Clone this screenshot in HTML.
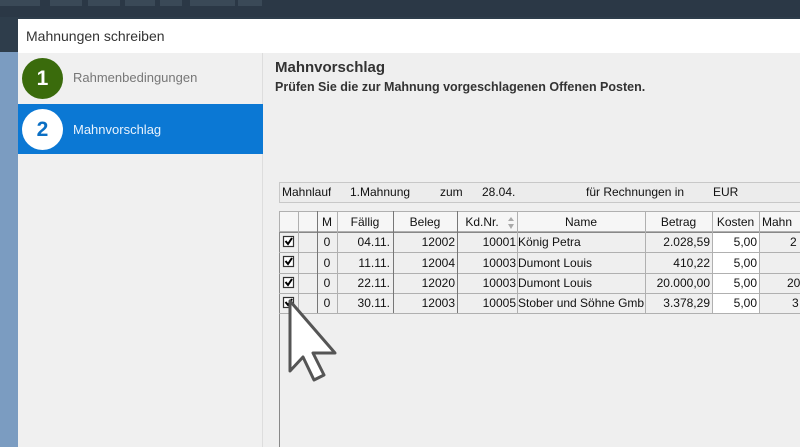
<!DOCTYPE html>
<html><head><style>
*{margin:0;padding:0;box-sizing:border-box}
html,body{width:800px;height:447px;overflow:hidden}
body{position:relative;background:#2e3d4b;font-family:"Liberation Sans",sans-serif}
.abs{position:absolute}
.cell{position:absolute;font-size:12px;color:#111;line-height:20px;white-space:nowrap;overflow:hidden}
</style></head><body>
<div class="abs" style="left:0;top:0;width:800px;height:17px;background:#2b3846"></div>
<div class="abs" style="left:0;top:0;width:40px;height:6px;background:#3a4957"></div>
<div class="abs" style="left:50px;top:0;width:32px;height:6px;background:#3a4957"></div>
<div class="abs" style="left:88px;top:0;width:32px;height:6px;background:#3a4957"></div>
<div class="abs" style="left:125px;top:0;width:30px;height:6px;background:#3a4957"></div>
<div class="abs" style="left:160px;top:0;width:22px;height:6px;background:#3a4957"></div>
<div class="abs" style="left:190px;top:0;width:45px;height:6px;background:#3a4957"></div>
<div class="abs" style="left:238px;top:0;width:24px;height:6px;background:#3a4957"></div>
<div class="abs" style="left:0;top:52px;width:18px;height:395px;background:#7b9cc1"></div>
<div class="abs" style="left:18px;top:19px;width:782px;height:34px;background:#fff"></div>
<div class="abs" style="left:26px;top:28px;font-size:14px;color:#333">Mahnungen schreiben</div>
<div class="abs" style="left:18px;top:53px;width:245px;height:394px;background:#f0f0f0;border-right:1px solid #ddd"></div>
<div class="abs" style="left:263px;top:53px;width:537px;height:394px;background:#efefef"></div>
<div class="abs" style="left:22px;top:58px;width:41px;height:41px;border-radius:50%;background:#3a6b0c;color:#fff;font-weight:bold;font-size:21px;text-align:center;line-height:41px">1</div>
<div class="abs" style="left:73px;top:70px;font-size:13px;color:#777">Rahmenbedingungen</div>
<div class="abs" style="left:18px;top:104px;width:245px;height:50px;background:#0b78d4"></div>
<div class="abs" style="left:22px;top:109px;width:41px;height:41px;border-radius:50%;background:#fff;color:#0b6fc4;font-weight:bold;font-size:21px;text-align:center;line-height:41px">2</div>
<div class="abs" style="left:73px;top:122px;font-size:13px;color:#e8f2fc">Mahnvorschlag</div>
<div class="abs" style="left:275px;top:59px;font-size:15px;font-weight:bold;color:#333">Mahnvorschlag</div>
<div class="abs" style="left:275px;top:80px;font-size:12.5px;font-weight:bold;color:#333">Prüfen Sie die zur Mahnung vorgeschlagenen Offenen Posten.</div>
<div class="abs" style="left:279px;top:182px;width:530px;height:21px;border:1px solid #c8c8c8;background:#ececec"></div>
<div class="cell" style="left:282px;top:182px">Mahnlauf</div>
<div class="cell" style="left:350px;top:182px">1.Mahnung</div>
<div class="cell" style="left:440px;top:182px">zum</div>
<div class="cell" style="left:482px;top:182px">28.04.</div>
<div class="cell" style="left:586px;top:182px">für Rechnungen in</div>
<div class="cell" style="left:713px;top:182px">EUR</div>
<div class="abs" style="left:279px;top:211px;width:530px;height:236px;border-left:1px solid #888;border-top:1px solid #888;background:#efefef"></div>
<svg class="abs" style="left:279px;top:211px" width="521" height="103">
<g stroke="#b0b0b0" stroke-width="1" fill="none">
<rect x="0.5" y="0.5" width="540" height="20" fill="#f6f6f6"/>
<rect x="433" y="21" width="47" height="81" fill="#fff" stroke="none"/>
<line x1="0" y1="21.5" x2="521" y2="21.5" stroke="#888"/>
<line x1="0" y1="41.5" x2="521" y2="41.5"/>
<line x1="0" y1="62.5" x2="521" y2="62.5"/>
<line x1="0" y1="82.5" x2="521" y2="82.5"/>
<line x1="0" y1="102.5" x2="521" y2="102.5"/>
<line x1="19.5" y1="0" x2="19.5" y2="102"/>
<line x1="38.5" y1="0" x2="38.5" y2="102" stroke="#777"/>
<line x1="58.5" y1="0" x2="58.5" y2="102"/>
<line x1="114.5" y1="0" x2="114.5" y2="102" stroke="#777"/>
<line x1="178.5" y1="0" x2="178.5" y2="102" stroke="#777"/>
<line x1="238.5" y1="0" x2="238.5" y2="102"/>
<line x1="366.5" y1="0" x2="366.5" y2="102"/>
<line x1="433.5" y1="0" x2="433.5" y2="102"/>
<line x1="480.5" y1="0" x2="480.5" y2="102"/>
</g>
<path d="M232 6 L235 10 L229 10Z M232 18 L235 13 L229 13Z" fill="#aaa"/>
<g fill="#fff" stroke="#333" stroke-width="1.2">
<rect x="4.5" y="25.5" width="10" height="10"/><rect x="4.5" y="45.5" width="10" height="10"/><rect x="4.5" y="66.5" width="10" height="10"/><rect x="4.5" y="86.5" width="10" height="10"/>
</g>
<g fill="none" stroke="#000" stroke-width="2">
<path d="M6.5 30 L9 33 L13 27"/><path d="M6.5 50 L9 53 L13 47"/><path d="M6.5 71 L9 74 L13 68"/><path d="M6.5 91 L9 94 L13 88"/>
</g>
</svg>
<div class="cell" style="left:317px;top:212px;width:20px;text-align:center">M</div>
<div class="cell" style="left:337px;top:212px;width:56px;text-align:center">Fällig</div>
<div class="cell" style="left:393px;top:212px;width:64px;text-align:center">Beleg</div>
<div class="cell" style="left:457px;top:212px;width:50px;text-align:center">Kd.Nr.</div>
<div class="cell" style="left:517px;top:212px;width:128px;text-align:center">Name</div>
<div class="cell" style="left:645px;top:212px;width:67px;text-align:center">Betrag</div>
<div class="cell" style="left:712px;top:212px;width:47px;text-align:center">Kosten</div>
<div class="cell" style="left:762px;top:212px">Mahn</div>

<div class="cell" style="left:317px;top:232px;width:20px;text-align:center">0</div>
<div class="cell" style="left:337px;top:232px;width:53px;text-align:right">04.11.</div>
<div class="cell" style="left:393px;top:232px;width:62px;text-align:right">12002</div>
<div class="cell" style="left:457px;top:232px;width:59px;text-align:right">10001</div>
<div class="cell" style="left:518px;top:232px;width:126px">König Petra</div>
<div class="cell" style="left:645px;top:232px;width:65px;text-align:right">2.028,59</div>
<div class="cell" style="left:712px;top:232px;width:45px;text-align:right">5,00</div>
<div class="cell" style="left:790px;top:232px">2</div>

<div class="cell" style="left:317px;top:253px;width:20px;text-align:center">0</div>
<div class="cell" style="left:337px;top:253px;width:53px;text-align:right">11.11.</div>
<div class="cell" style="left:393px;top:253px;width:62px;text-align:right">12004</div>
<div class="cell" style="left:457px;top:253px;width:59px;text-align:right">10003</div>
<div class="cell" style="left:518px;top:253px;width:126px">Dumont Louis</div>
<div class="cell" style="left:645px;top:253px;width:65px;text-align:right">410,22</div>
<div class="cell" style="left:712px;top:253px;width:45px;text-align:right">5,00</div>

<div class="cell" style="left:317px;top:273px;width:20px;text-align:center">0</div>
<div class="cell" style="left:337px;top:273px;width:53px;text-align:right">22.11.</div>
<div class="cell" style="left:393px;top:273px;width:62px;text-align:right">12020</div>
<div class="cell" style="left:457px;top:273px;width:59px;text-align:right">10003</div>
<div class="cell" style="left:518px;top:273px;width:126px">Dumont Louis</div>
<div class="cell" style="left:645px;top:273px;width:65px;text-align:right">20.000,00</div>
<div class="cell" style="left:712px;top:273px;width:45px;text-align:right">5,00</div>
<div class="cell" style="left:787px;top:273px">20</div>

<div class="cell" style="left:317px;top:293px;width:20px;text-align:center">0</div>
<div class="cell" style="left:337px;top:293px;width:53px;text-align:right">30.11.</div>
<div class="cell" style="left:393px;top:293px;width:62px;text-align:right">12003</div>
<div class="cell" style="left:457px;top:293px;width:59px;text-align:right">10005</div>
<div class="cell" style="left:518px;top:293px;width:126px">Stober und Söhne GmbH</div>
<div class="cell" style="left:645px;top:293px;width:65px;text-align:right">3.378,29</div>
<div class="cell" style="left:712px;top:293px;width:45px;text-align:right">5,00</div>
<div class="cell" style="left:792px;top:293px">3</div>

<svg class="abs" style="left:280px;top:295px" width="70" height="95">
<path d="M10 6 L10 76 L23 62 L34 85 L44 80 L33 58 L55 58 Z" fill="#fff" stroke="#555" stroke-width="3" stroke-linejoin="round"/>
</svg>
</body></html>
